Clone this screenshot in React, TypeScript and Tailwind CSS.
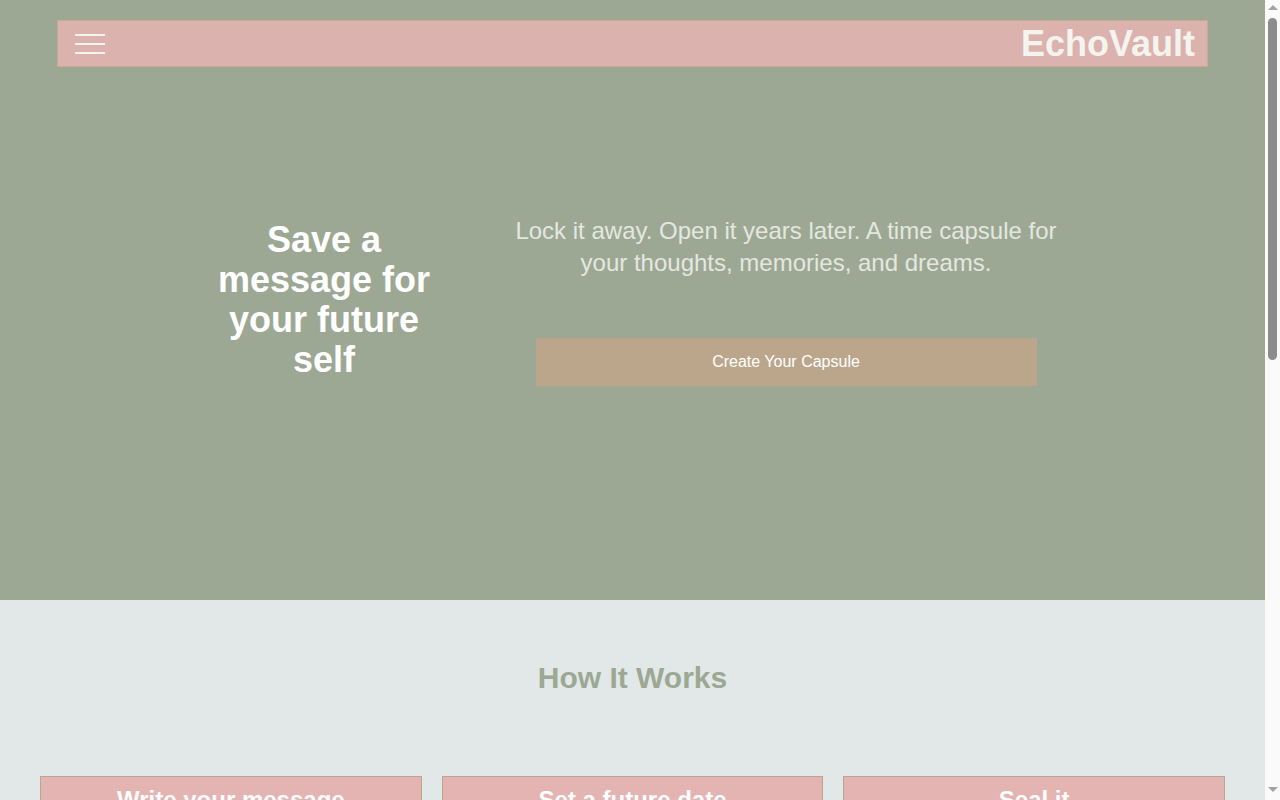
import React from 'react';

const steps = [
  { title: 'Write your message', text: 'Put down your thoughts, hopes and memories in a letter to yourself.' },
  { title: 'Set a future date', text: 'Choose the day your capsule unlocks, months or years from now.' },
  { title: 'Seal it', text: 'Lock it away and we will deliver it back to you when the time comes.' },
];

function Header() {
  return (
    <header className="absolute top-[20px] left-[4.5%] right-[4.5%] h-[47px] flex items-center justify-between border border-[#c6ab94] bg-[#dcb2ae] pl-[17px] pr-[12px]">
      <button className="flex flex-col gap-[7px] w-[30px]" aria-label="Menu">
        <span className="block h-[2px] w-full bg-[#f5f5f0]" />
        <span className="block h-[2px] w-full bg-[#f5f5f0]" />
        <span className="block h-[2px] w-full bg-[#f5f5f0]" />
      </button>
      <div className="text-4xl leading-10 font-bold text-[#f4f4ef]">EchoVault</div>
    </header>
  );
}

// browser-style scrollbar gutter
function ScrollGutter() {
  return (
    <div className="fixed top-0 right-0 h-screen w-[15px] bg-[#fafafa] flex flex-col items-center">
      <svg width="10" height="6" viewBox="0 0 10 6" className="mt-[5px]">
        <path d="M5 0 L10 5 L0 5 Z" fill="#a3a3a3" />
      </svg>
      <div className="mt-[7px] h-[342px] w-[9px] rounded-full bg-[#8c8c8c]" />
      <div className="flex-1" />
      <svg width="10" height="6" viewBox="0 0 10 6" className="mb-[7px]">
        <path d="M0 0 L10 0 L5 5 Z" fill="#a3a3a3" />
      </svg>
    </div>
  );
}

export default function App() {
  return (
    <div className="mr-[15px] font-['Liberation_Sans',Arial,sans-serif]">
      <section className="relative h-[600px] bg-[#9ca893] flex items-center justify-center gap-[67px]">
        <Header />
        <h1 className="w-[240px] text-center text-4xl leading-10 font-bold text-white">
          Save a message for your future self
        </h1>
        <div className="w-[550px] flex flex-col items-center">
          <p className="text-center text-2xl leading-8 text-[#e4e7e0]">
            Lock it away. Open it years later. A time capsule for your thoughts, memories, and dreams.
          </p>
          <button className="mt-[59px] w-[501px] h-12 bg-[#bba68b] text-base text-white">
            Create Your Capsule
          </button>
        </div>
      </section>

      <section className="min-h-[1200px] bg-[#e1e8e7] pt-[60px] pb-[80px] px-[40px]">
        <h2 className="text-center text-3xl leading-9 font-bold text-[#9ca893]">How It Works</h2>
        <div className="mt-[80px] grid grid-cols-3 gap-[20px]">
          {steps.map((s) => (
            <div key={s.title} className="border border-[#bba68b] bg-[#e4b4b3] pt-[7px] pb-8 px-6 text-center">
              <h3 className="text-2xl leading-8 font-bold text-white">{s.title}</h3>
              <p className="mt-4 text-base text-white">{s.text}</p>
            </div>
          ))}
        </div>
      </section>
      <ScrollGutter />
    </div>
  );
}
